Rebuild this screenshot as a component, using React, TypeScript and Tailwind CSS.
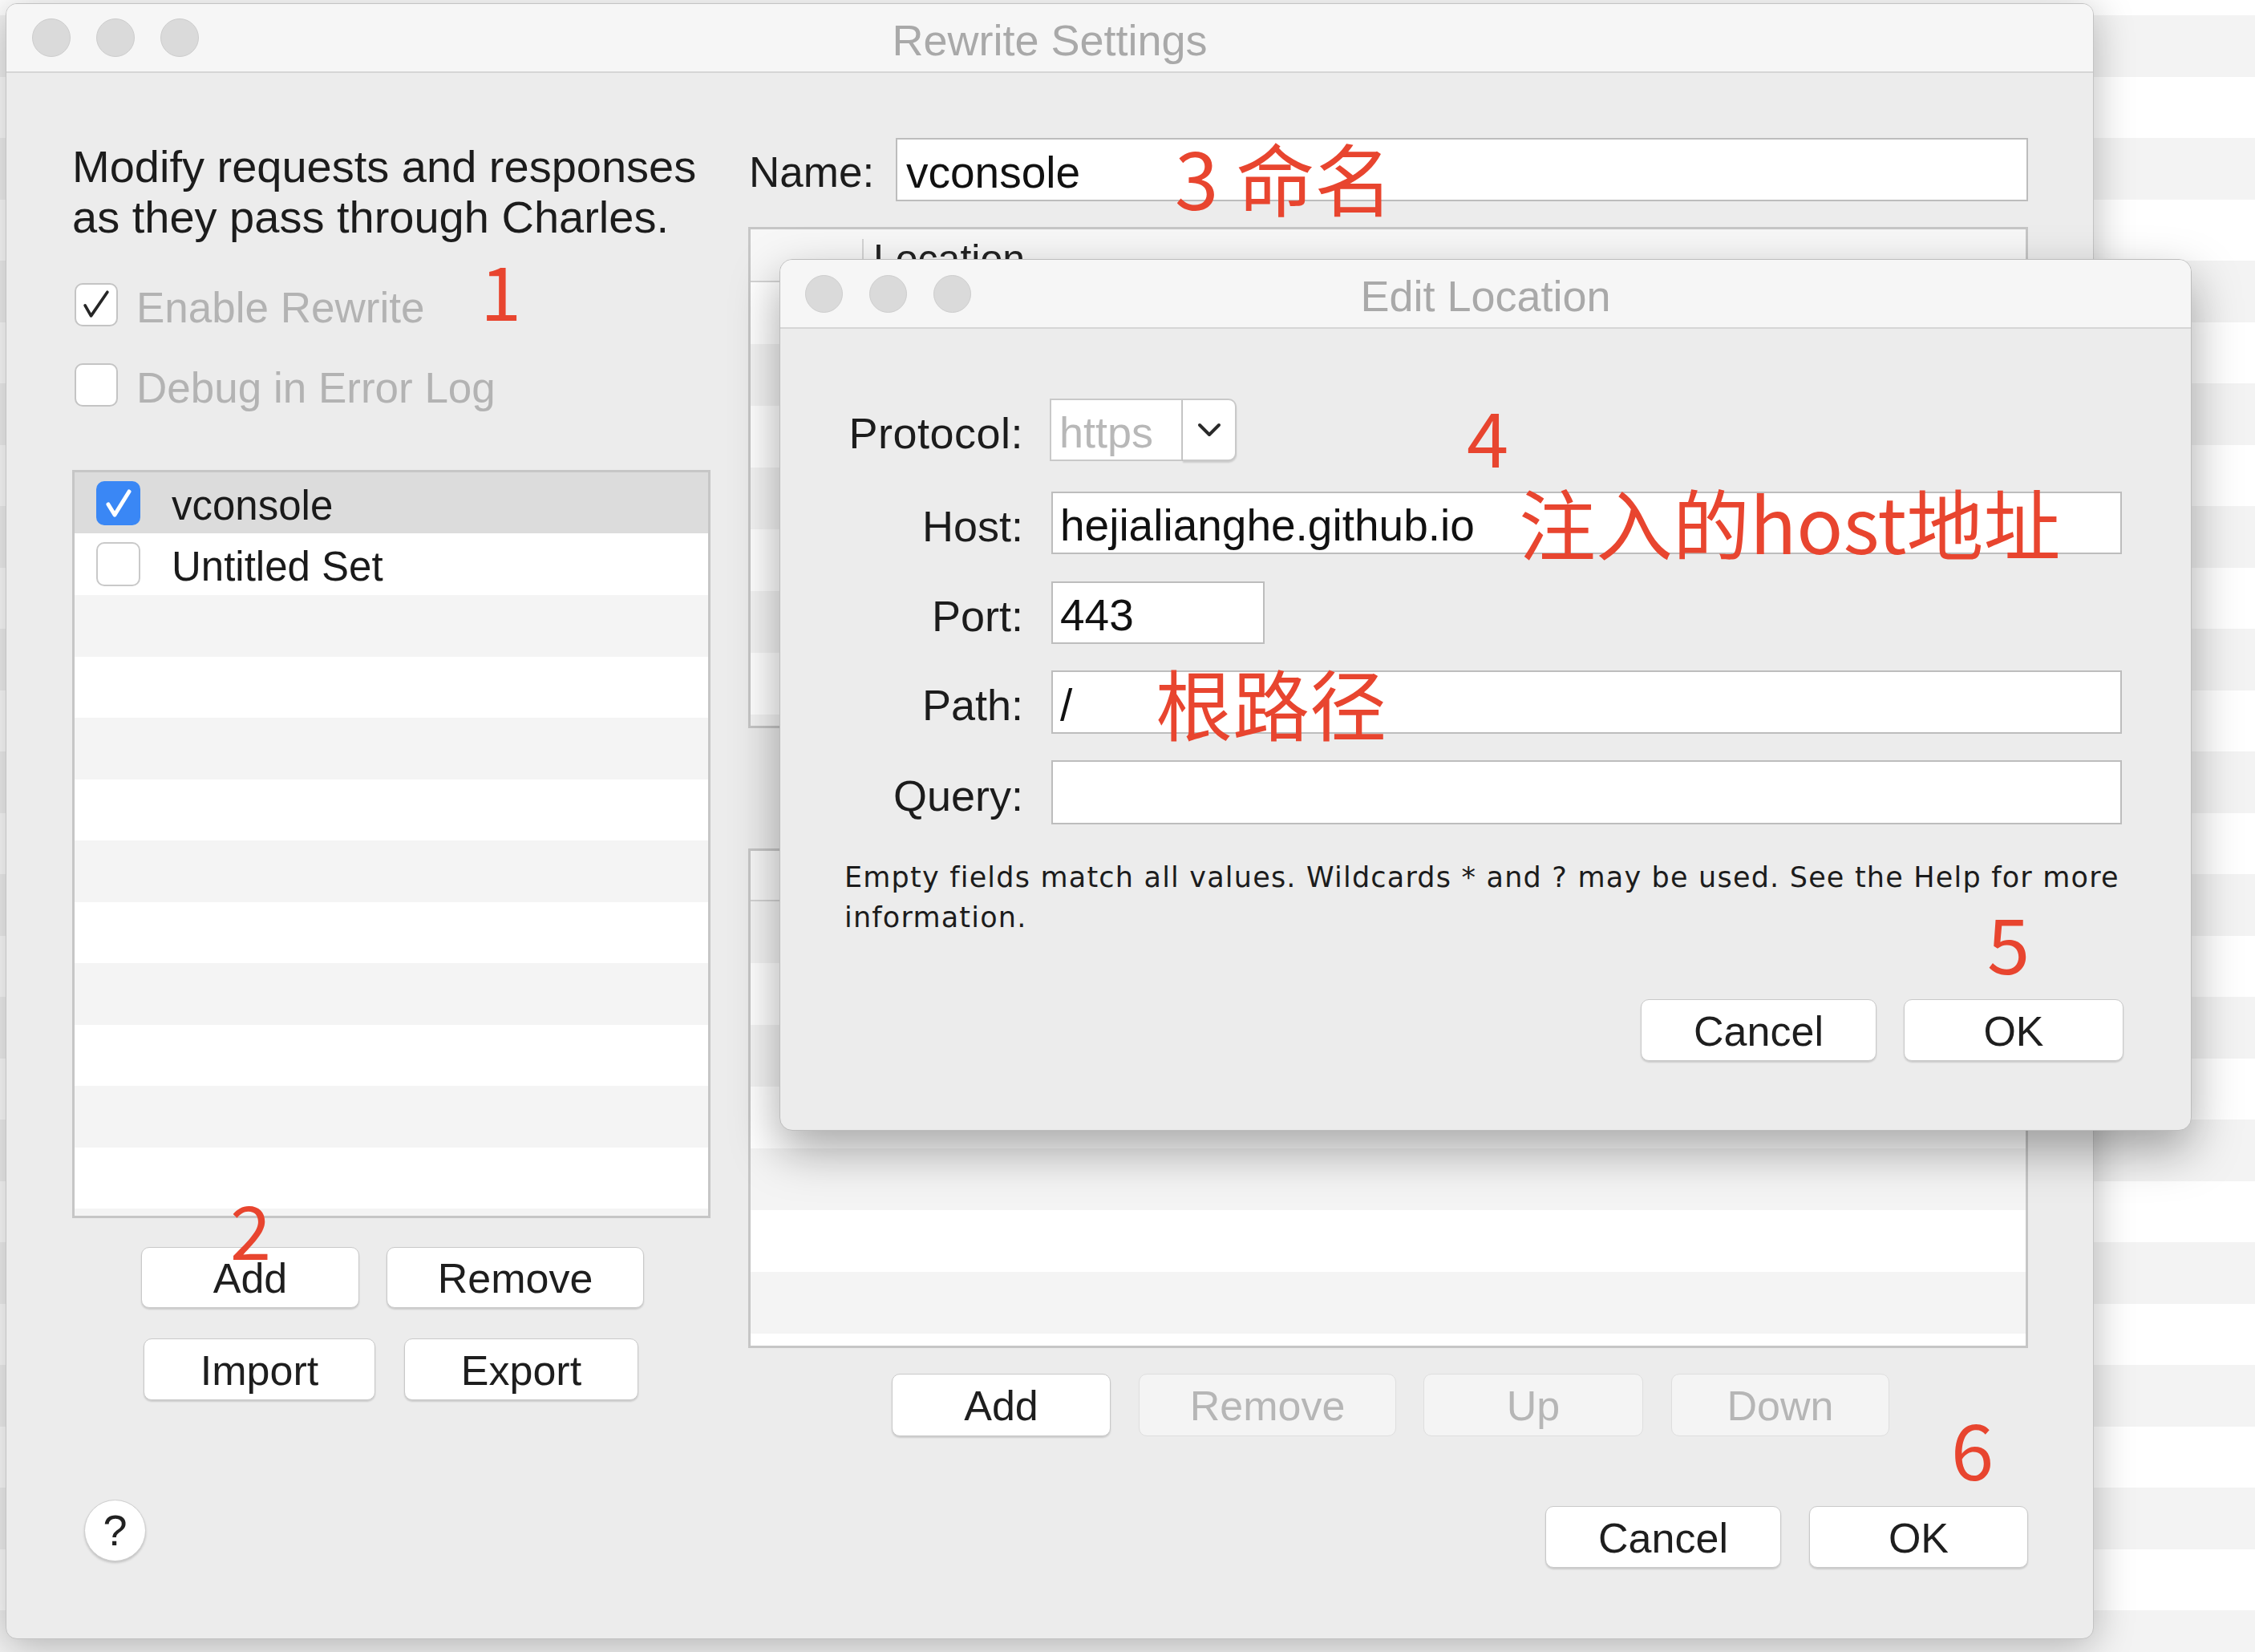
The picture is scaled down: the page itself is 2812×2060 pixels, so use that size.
import React from 'react';

function Light({ className = '' }: { className?: string }) {
  return <div className={`rounded-full bg-[#dadada] border border-[#cdcdcd] ${className}`} />;
}

function Note({ className = '', children }: { className?: string; children: React.ReactNode }) {
  return (
    <div
      className={`absolute font-['Noto_Sans_CJK_SC',sans-serif] text-[#e8452f] leading-none whitespace-nowrap ${className}`}
    >
      {children}
    </div>
  );
}

const btnBase = 'flex items-center justify-center rounded-[10px] border text-[52px] leading-none pt-[2px]';
const btnOn = 'bg-white border-[#c9c9c9] text-[#1e1e1e] shadow-[0_2px_2px_rgba(0,0,0,0.14)]';
const btnOff = 'bg-[#f4f4f4] border-[#dedede] text-[#b6b6b6]';

function DarkCheck() {
  return (
    <svg width="54" height="54" viewBox="0 0 54 54">
      <path d="M12 28 L20 42 L42 10" fill="none" stroke="#262626" strokeWidth="4" strokeLinecap="round" strokeLinejoin="round" />
    </svg>
  );
}

function WhiteCheck() {
  return (
    <svg width="55" height="55" viewBox="0 0 55 55">
      <path d="M15 29 L23 42 L41 13" fill="none" stroke="#ffffff" strokeWidth="5" strokeLinecap="round" strokeLinejoin="round" />
    </svg>
  );
}

export default function App() {
  const stripes = Array.from({ length: 27 }, (_, i) => i);
  const listRows = Array.from({ length: 11 }, (_, i) => i);
  const topRows = Array.from({ length: 8 }, (_, i) => i);
  const bottomRows = Array.from({ length: 8 }, (_, i) => i);

  return (
    <div className="relative w-[2812px] h-[2060px] overflow-hidden bg-white font-['Liberation_Sans',Arial,sans-serif]">
      {/* desktop / underlying window stripes */}
      <div className="flex flex-col">
        <div className="h-[19px] bg-white" />
        {stripes.map((i) => (
          <div key={i} className={i % 2 === 0 ? 'h-[76.5px] shrink-0 bg-[#f3f3f3]' : 'h-[76.5px] shrink-0 bg-white'} />
        ))}
      </div>

      {/* main window */}
      <div className="absolute left-[7px] top-[4px] w-[2604px] h-[2040px] rounded-[14px] border border-[#c3c3c3] bg-[#ececec] shadow-[0_8px_50px_rgba(0,0,0,0.28)] overflow-hidden flex flex-col">
        <div className="relative h-[86px] shrink-0 bg-[#f6f6f6] border-b-2 border-[#d6d6d6] flex items-center">
          <div className="flex ml-[32px] gap-[32px]">
            <Light className="w-[48px] h-[48px]" />
            <Light className="w-[48px] h-[48px]" />
            <Light className="w-[48px] h-[48px]" />
          </div>
          <div className="absolute inset-0 flex items-center justify-center pt-[6px] text-[54px] text-[#a9a9a9]">
            Rewrite Settings
          </div>
        </div>

        <div className="flex flex-1">
          {/* left column */}
          <div className="ml-[82px] w-[796px] shrink-0 flex flex-col">
            <div className="mt-[85px] text-[56px] leading-[63px] text-[#1c1c1c] whitespace-nowrap">
              Modify requests and responses
              <br />
              as they pass through Charles.
            </div>
            <div className="mt-[51px] h-[54px] flex items-center">
              <div className="ml-[3px] w-[54px] h-[54px] rounded-[10px] border-2 border-[#c4c4c4] bg-white flex items-center justify-center overflow-hidden">
                <DarkCheck />
              </div>
              <span className="ml-[23px] pt-[7px] text-[53px] text-[#b3b3b3] whitespace-nowrap">Enable Rewrite</span>
            </div>
            <div className="mt-[46px] h-[54px] flex items-center">
              <div className="ml-[3px] w-[54px] h-[54px] rounded-[10px] border-2 border-[#c4c4c4] bg-white" />
              <span className="ml-[23px] pt-[7px] text-[53px] text-[#b3b3b3] whitespace-nowrap">Debug in Error Log</span>
            </div>

            <div className="mt-[79px] h-[933px] border-[3px] border-[#c6c6c6] bg-white overflow-hidden flex flex-col">
              <div className="h-[76px] shrink-0 bg-[#dcdcdc] flex items-center">
                <div className="ml-[27px] w-[55px] h-[55px] rounded-[10px] bg-[#3a87f5] flex items-center justify-center">
                  <WhiteCheck />
                </div>
                <span className="ml-[39px] pt-[8px] text-[51px] text-[#1a1a1a]">vconsole</span>
              </div>
              <div className="h-[77px] shrink-0 bg-white flex items-center">
                <div className="ml-[27px] w-[55px] h-[55px] rounded-[10px] border-2 border-[#c9c9c9] bg-white" />
                <span className="ml-[39px] pt-[8px] text-[51px] text-[#1a1a1a]">Untitled Set</span>
              </div>
              {listRows.map((i) => (
                <div key={i} className={i % 2 === 0 ? 'h-[76.5px] shrink-0 bg-[#f4f4f4]' : 'h-[76.5px] shrink-0 bg-white'} />
              ))}
            </div>

            <div className="mt-[36px] ml-[86px] flex gap-[34px]">
              <div className={`${btnBase} ${btnOn} w-[272px] h-[76px]`}>Add</div>
              <div className={`${btnBase} ${btnOn} w-[321px] h-[76px]`}>Remove</div>
            </div>
            <div className="mt-[38px] ml-[89px] flex gap-[36px]">
              <div className={`${btnBase} ${btnOn} w-[289px] h-[77px]`}>Import</div>
              <div className={`${btnBase} ${btnOn} w-[292px] h-[77px]`}>Export</div>
            </div>
            <div className="mt-[124px] ml-[15px] w-[77px] h-[77px] rounded-full bg-white border border-[#cfcfcf] shadow-[0_2px_3px_rgba(0,0,0,0.18)] flex items-center justify-center text-[54px] text-[#222]">
              ?
            </div>
          </div>

          {/* right column */}
          <div className="ml-[47px] w-[1596px] shrink-0 flex flex-col">
            <div className="mt-[81px] h-[79px] flex items-center">
              <span className="ml-[1px] w-[183px] pt-[7px] text-[53px] text-[#1c1c1c]">Name:</span>
              <div className="w-[1412px] h-[79px] bg-white border-2 border-[#bdbdbd] flex items-center pl-[11px] pt-[7px] text-[55px] text-[#111]">
                vconsole
              </div>
            </div>

            <div className="mt-[32px] h-[625px] border-[3px] border-[#c6c6c6] bg-white overflow-hidden flex flex-col">
              <div className="h-[66px] shrink-0 bg-[#f7f7f7] border-b-2 border-[#d4d4d4] flex">
                <div className="w-[141px] border-r-2 border-[#d4d4d4] mt-[12px]" />
                <div className="pl-[12px] pt-[12px] text-[50px] text-[#222] leading-none">Location</div>
              </div>
              {topRows.map((i) => (
                <div key={i} className={i % 2 === 0 ? 'h-[77px] shrink-0 bg-white' : 'h-[77px] shrink-0 bg-[#f4f4f4]'} />
              ))}
            </div>

            <div className="mt-[150px] h-[623px] border-[3px] border-[#c6c6c6] bg-white overflow-hidden flex flex-col">
              <div className="h-[63px] shrink-0 bg-[#f7f7f7] border-b-2 border-[#d4d4d4]" />
              {bottomRows.map((i) => (
                <div key={i} className={i % 2 === 0 ? 'h-[77px] shrink-0 bg-[#f4f4f4]' : 'h-[77px] shrink-0 bg-white'} />
              ))}
            </div>

            <div className="mt-[32px] ml-[179px] flex">
              <div className={`${btnBase} ${btnOn} w-[273px] h-[78px]`}>Add</div>
              <div className={`${btnBase} ${btnOff} ml-[35px] w-[321px] h-[78px]`}>Remove</div>
              <div className={`${btnBase} ${btnOff} ml-[34px] w-[274px] h-[78px]`}>Up</div>
              <div className={`${btnBase} ${btnOff} ml-[35px] w-[272px] h-[78px]`}>Down</div>
            </div>

            <div className="mt-[87px] flex justify-end gap-[35px]">
              <div className={`${btnBase} ${btnOn} w-[294px] h-[77px]`}>Cancel</div>
              <div className={`${btnBase} ${btnOn} w-[273px] h-[77px]`}>OK</div>
            </div>
          </div>
        </div>
      </div>

      {/* Edit Location dialog */}
      <div className="absolute left-[972px] top-[323px] w-[1761px] h-[1087px] rounded-[16px] border border-[#bdbdbd] bg-[#ececec] shadow-[0_24px_60px_rgba(0,0,0,0.35)] overflow-hidden flex flex-col">
        <div className="relative h-[86px] shrink-0 bg-[#f6f6f6] border-b-2 border-[#d6d6d6] flex items-center">
          <div className="flex ml-[31px] gap-[33px]">
            <Light className="w-[47px] h-[47px]" />
            <Light className="w-[47px] h-[47px]" />
            <Light className="w-[47px] h-[47px]" />
          </div>
          <div className="absolute inset-0 flex items-center justify-center pt-[7px] text-[54px] text-[#a9a9a9]">Edit Location</div>
        </div>

        <div className="flex flex-col">
          <div className="mt-[87px] h-[78px] flex items-center">
            <span className="w-[303px] pt-[8px] text-right text-[54px] text-[#1c1c1c] tracking-[0.5px]">Protocol:</span>
            <div className="ml-[33px] flex h-[78px]">
              <div className="w-[166px] h-[78px] bg-white border-2 border-[#c9c9c9] flex items-center pl-[10px] pt-[7px] text-[54px] text-[#b8b8b8]">
                https
              </div>
              <div className="w-[67px] h-[78px] bg-white border-y-2 border-r-2 border-[#c9c9c9] rounded-r-[10px] shadow-[0_2px_2px_rgba(0,0,0,0.14)] flex items-center justify-center">
                <svg width="30" height="18" viewBox="0 0 30 18">
                  <polyline points="3,3 15,15 27,3" fill="none" stroke="#2a2a2a" strokeWidth="4" strokeLinecap="round" strokeLinejoin="round" />
                </svg>
              </div>
            </div>
          </div>

          <div className="mt-[38px] h-[78px] flex items-center">
            <span className="w-[303px] pt-[8px] text-right text-[54px] text-[#1c1c1c]">Host:</span>
            <div className="ml-[35px] w-[1335px] h-[78px] bg-white border-2 border-[#bdbdbd] flex items-center pl-[9px] pt-[7px] text-[55px] text-[#111]">
              hejialianghe.github.io
            </div>
          </div>

          <div className="mt-[34px] h-[78px] flex items-center">
            <span className="w-[303px] pt-[8px] text-right text-[54px] text-[#1c1c1c]">Port:</span>
            <div className="ml-[35px] w-[266px] h-[78px] bg-white border-2 border-[#bdbdbd] flex items-center pl-[9px] pt-[7px] text-[55px] text-[#111]">
              443
            </div>
          </div>

          <div className="mt-[33px] h-[79px] flex items-center">
            <span className="w-[303px] pt-[8px] text-right text-[54px] text-[#1c1c1c]">Path:</span>
            <div className="ml-[35px] w-[1335px] h-[79px] bg-white border-2 border-[#bdbdbd] flex items-center pl-[9px] pt-[7px] text-[55px] text-[#111]">
              /
            </div>
          </div>

          <div className="mt-[33px] h-[80px] flex items-center">
            <span className="w-[303px] pt-[8px] text-right text-[54px] text-[#1c1c1c]">Query:</span>
            <div className="ml-[35px] w-[1335px] h-[80px] bg-white border-2 border-[#bdbdbd]" />
          </div>

          <div className="mt-[41px] ml-[80px] font-['DejaVu_Sans',sans-serif] text-[35px] tracking-[1.2px] leading-[50px] text-[#1c1c1c] whitespace-nowrap">
            Empty fields match all values. Wildcards * and ? may be used. See the Help for more
            <br />
            information.
          </div>

          <div className="mt-[77px] pr-[84px] flex justify-end gap-[34px]">
            <div className={`${btnBase} ${btnOn} w-[294px] h-[77px]`}>Cancel</div>
            <div className={`${btnBase} ${btnOn} w-[274px] h-[77px]`}>OK</div>
          </div>
        </div>
      </div>

      {/* annotations */}
      <Note className="left-[599px] top-[314px] text-[92px]">1</Note>
      <Note className="left-[287px] top-[1485px] text-[92px]">2</Note>
      <Note className="left-[1465px] top-[170px] text-[98px]">3 命名</Note>
      <Note className="left-[1829px] top-[495px] text-[94px]">4</Note>
      <Note className="left-[1894px] top-[602px] text-[96px]">注入的host地址</Note>
      <Note className="left-[1441px] top-[827px] text-[96px]">根路径</Note>
      <Note className="left-[2478px] top-[1126px] text-[96px]">5</Note>
      <Note className="left-[2433px] top-[1757px] text-[96px]">6</Note>
    </div>
  );
}
